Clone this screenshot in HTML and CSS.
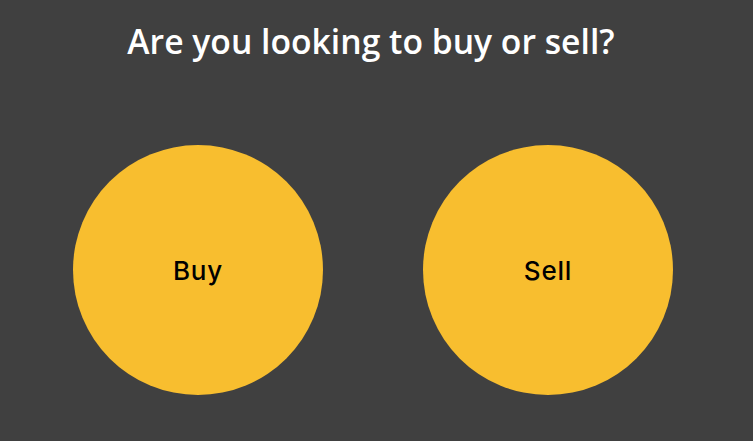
FILE: index.html
```html
<!DOCTYPE html>
<html>
<head>
<meta charset="utf-8">
<link rel="stylesheet" href="styles.css">
</head>
<body>
<main class="page">
  <h1 class="title">Are you looking to buy or sell?</h1>
  <div class="choices">
    <button class="choice">Buy</button>
    <button class="choice">Sell</button>
  </div>
</main>
</body>
</html>
```
FILE: styles.css
```css
html, body {
  margin: 0;
  padding: 0;
  background: #404040;
}
.page {
  width: 753px;
  height: 441px;
  display: flex;
  flex-direction: column;
}
.title {
  margin: 21px 11px 0 0;
  text-align: center;
  color: #ffffff;
  font-family: "Open Sans", sans-serif;
  font-weight: 600;
  font-size: 33.7px;
  line-height: 40px;
}
.choices {
  display: flex;
  gap: 100px;
  padding-left: 73px;
  margin-top: 84px;
}
.choice {
  width: 250px;
  height: 250px;
  border-radius: 50%;
  border: none;
  padding: 0;
  background: #f8be2f;
  color: #000000;
  font-family: Inter, "Open Sans", sans-serif;
  font-weight: 500;
  font-size: 26px;
  letter-spacing: 0.8px;
  cursor: pointer;
}
```
